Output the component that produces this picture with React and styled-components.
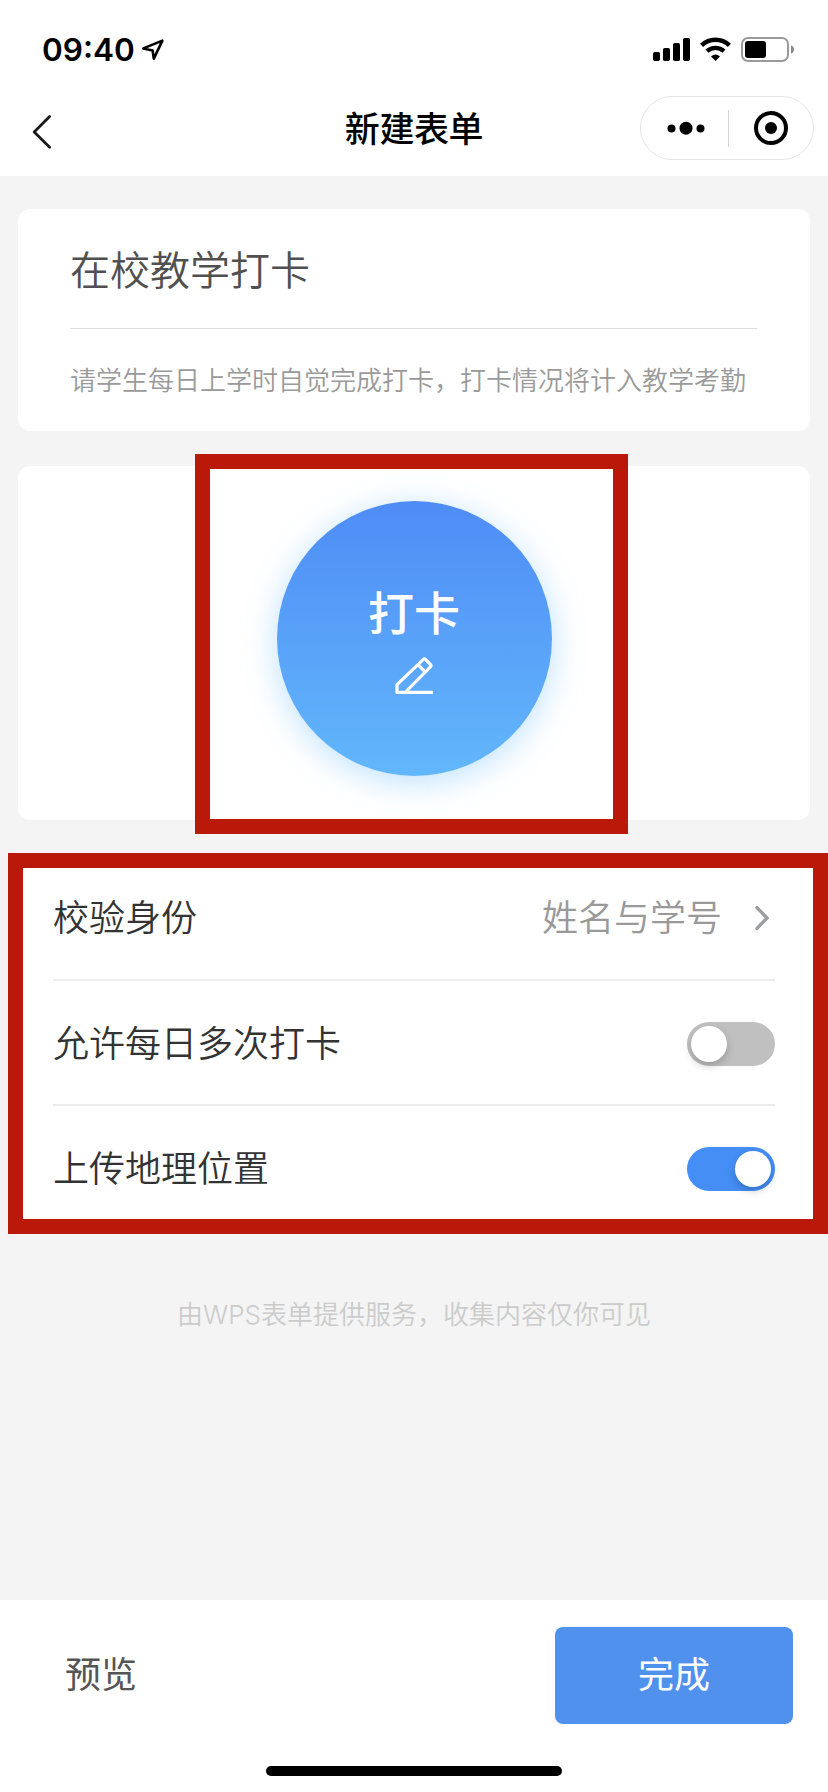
import React from "react";
import styled, { createGlobalStyle } from "styled-components";

const GlobalStyle = createGlobalStyle`
  * { box-sizing: border-box; }
  body {
    margin: 0;
    background: #f4f4f4;
    font-family: "Noto Sans CJK SC", "Noto Sans", sans-serif;
  }
`;

const Screen = styled.div`
  width: 828px;
  height: 1792px;
  display: flex;
  flex-direction: column;
  background: #f4f4f4;
  overflow: hidden;
`;

const StatusBar = styled.div`
  height: 88px;
  flex: none;
  display: flex;
  justify-content: space-between;
  align-items: flex-start;
  padding: 30px 33px 0 42px;
  background: #fff;
`;

const Clock = styled.div`
  display: flex;
  align-items: center;
  gap: 6px;
  height: 40px;
  color: #000;
  font-family: Inter, "Liberation Sans", sans-serif;
  font-size: 31.5px;
  font-weight: 600;
  line-height: 40px;
`;

const Time = styled.span`
  width: 93px;
  white-space: nowrap;
`;

const StatusIcons = styled.div`
  display: flex;
  gap: 10px;
  padding-top: 7px;
`;

const NavBar = styled.div`
  height: 88px;
  flex: none;
  display: grid;
  grid-template-columns: 1fr auto 1fr;
  align-items: start;
  padding: 8px 14px 0 14px;
  background: #fff;
`;

const BackButton = styled.button`
  width: 54px;
  height: 72px;
  display: flex;
  padding: 18px 0 0 18px;
  border: 0;
  background: none;
`;

const Title = styled.h1`
  margin: 0;
  color: #000;
  font-size: 35px;
  font-weight: 500;
  line-height: 62px;
  letter-spacing: -0.4px;
`;

const Capsule = styled.div`
  justify-self: end;
  width: 174px;
  height: 64px;
  display: flex;
  align-items: center;
  border: 1px solid #e4e4e4;
  border-radius: 32px;
`;

const CapsuleButton = styled.button`
  flex: 1;
  height: 37px;
  display: flex;
  align-items: center;
  justify-content: center;
  padding: 0 0 0 3px;
  border: 0;
  background: none;

  & + & {
    padding: 0;
    border-left: 1px solid #d4d4d4;
  }
`;

const Content = styled.main`
  flex: 1;
  display: flex;
  flex-direction: column;
  padding-top: 33px;
`;

const Card = styled.section`
  margin: 0 18px;
  border-radius: 12px;
  background: #fff;
`;

const FormCard = styled(Card)`
  height: 222px;
  padding: 0 53px 0 52px;
`;

const FormTitle = styled.h2`
  margin: 0;
  height: 120px;
  border-bottom: 1px solid #dedede;
  color: #505050;
  font-size: 40px;
  font-weight: 350;
  line-height: 119px;
`;

const FormDescription = styled.p`
  margin: 0;
  color: #9a9a9a;
  font-size: 26px;
  font-weight: 350;
  line-height: 100px;
  white-space: nowrap;
`;

const PunchCard = styled(Card)`
  position: relative;
  height: 354px;
  margin-top: 35px;
  display: flex;
  justify-content: center;
  align-items: flex-start;
  padding-top: 35px;
`;

const PunchButton = styled.button`
  width: 275px;
  height: 275px;
  display: flex;
  flex-direction: column;
  align-items: center;
  gap: 14px;
  padding: 76px 0 0;
  border: 0;
  border-radius: 50%;
  background: linear-gradient(180deg, #4f8cf6 0%, #62b7fb 100%);
  box-shadow: 0 6px 32px rgba(98, 183, 251, 0.42);
  color: #fff;
  font-family: inherit;
  font-size: 46px;
  font-weight: 500;
  line-height: 66px;
`;

const PunchHighlight = styled.div`
  position: absolute;
  top: -12px;
  left: 177px;
  width: 433px;
  height: 380px;
  border: 15px solid #ba190a;
  pointer-events: none;
`;

const Settings = styled.section`
  margin: 33px 0 0 8px;
  height: 381px;
  padding: 0 39px 0 30px;
  border: 15px solid #ba190a;
  background: #fff;
`;

const SettingRow = styled.div`
  height: ${(p) => (p.$first ? 113 : 125)}px;
  display: flex;
  align-items: center;
  justify-content: space-between;
  margin-right: -1px;
  padding: ${(p) => (p.$first ? "0 0 12px" : p.$last ? "0" : "2px 0 0")};
  border-bottom: ${(p) => (p.$last ? "0" : "2px solid #ececec")};
  color: #333;
  font-size: 36px;
  font-weight: 350;
`;

const SettingLabel = styled.span`
  height: 52px;
  line-height: 47px;
`;

const SettingValue = styled.span`
  display: flex;
  align-items: center;
  gap: 32px;
  height: 52px;
  padding-right: 5px;
  color: #999;
  line-height: 47px;

  span { height: 52px; }
`;

const Toggle = styled.div`
  width: 88px;
  height: 44px;
  display: flex;
  justify-content: ${(p) => (p.$on ? "flex-end" : "flex-start")};
  padding: 4px;
  border-radius: 22px;
  background: ${(p) => (p.$on ? "#448ef6" : "#c0c0c0")};
`;

const Knob = styled.span`
  width: 36px;
  height: 36px;
  border-radius: 50%;
  background: #fff;
  box-shadow: 0 4px 8px rgba(0, 0, 0, 0.2);
`;

const ServiceNote = styled.p`
  margin: 61px 0 0;
  color: #cbcbcb;
  font-family: Inter, "Noto Sans CJK SC", sans-serif;
  font-size: 26px;
  font-weight: 350;
  line-height: 40px;
  text-align: center;
`;

const BottomBar = styled.footer`
  height: 192px;
  flex: none;
  display: flex;
  flex-direction: column;
  align-items: center;
  background: #fff;
`;

const Actions = styled.div`
  width: 100%;
  height: 166px;
  display: flex;
  justify-content: space-between;
  align-items: flex-start;
  padding: 27px 35px 0 65px;
`;

const ActionButton = styled.button`
  width: ${(p) => (p.$primary ? "238px" : "auto")};
  height: 97px;
  padding: 0 0 8px;
  border: 0;
  border-radius: 8px;
  background: ${(p) => (p.$primary ? "#5191ee" : "transparent")};
  color: ${(p) => (p.$primary ? "#fff" : "#555")};
  font-family: inherit;
  font-size: 36px;
  font-weight: 400;
`;

const HomeIndicator = styled.div`
  width: 296px;
  height: 10px;
  border-radius: 5px;
  background: #000;
`;

const LocationIcon = () => (
  <svg width="24" height="24" viewBox="0 0 24 24" fill="none" stroke="#000" strokeWidth="2.6" strokeLinejoin="round">
    <path d="M21.4 2.6 L2.3 10.4 L11.6 12.4 L12.8 20.6 Z" />
  </svg>
);

const SignalIcon = () => (
  <svg width="37" height="24" viewBox="0 0 37 24">
    <rect x="0" y="15" width="7" height="9" rx="1.8" />
    <rect x="10" y="11" width="7" height="13" rx="1.8" />
    <rect x="20" y="6" width="7" height="18" rx="1.8" />
    <rect x="30" y="1" width="7" height="23" rx="1.8" />
  </svg>
);

const WifiIcon = () => (
  <svg width="31" height="24" viewBox="0 0 31 24" fill="none" stroke="#000" strokeWidth="4.4">
    <path d="M1.6 8.4 A20 20 0 0 1 29.4 8.4" />
    <path d="M7 14.2 A12.4 12.4 0 0 1 24 14.2" />
    <path d="M11 19.4 Q15.5 15.4 20 19.4 L15.5 23.9 Z" fill="#000" stroke="none" />
  </svg>
);

const BatteryIcon = () => (
  <svg width="54" height="25" viewBox="0 0 54 25">
    <rect x="1" y="1" width="46" height="23" rx="6" fill="none" stroke="#9a9a9a" strokeWidth="2" />
    <rect x="4" y="4" width="21" height="17" rx="3" />
    <path d="M50 8.5 Q53 9.3 53 12.5 Q53 15.7 50 16.5 Z" fill="#8a8a8a" />
  </svg>
);

const BackIcon = () => (
  <svg width="22" height="36" viewBox="0 0 22 36" fill="none" stroke="#1a1a1a" strokeWidth="2.8" strokeLinecap="round" strokeLinejoin="round">
    <path d="M17.6 2.6 L2.2 17.9 L17.6 33.2" />
  </svg>
);

const MoreIcon = () => (
  <svg width="38" height="14" viewBox="0 0 38 14">
    <circle cx="4.5" cy="7.6" r="4" />
    <circle cx="19" cy="7.2" r="6.5" />
    <circle cx="33.5" cy="7.6" r="4" />
  </svg>
);

const CloseIcon = () => (
  <svg width="36" height="36" viewBox="0 0 36 36">
    <circle cx="18" cy="18" r="15" fill="none" stroke="#000" strokeWidth="4" />
    <circle cx="18" cy="18" r="6" />
  </svg>
);

const PencilIcon = () => (
  <svg width="40" height="40" viewBox="0 0 40 40" fill="none" stroke="#fff" strokeWidth="3.2" strokeLinejoin="round">
    <path d="M39 35.4 H3 V27.6 L29.4 2.4 Q30.4 1.5 31.4 2.4 L36.6 7.6 Q37.4 8.6 36.6 9.6 L11.6 35" />
    <path d="M24.2 7.8 L31.1 14.8" />
  </svg>
);

const ChevronIcon = () => (
  <svg width="16" height="28" viewBox="0 0 16 28" fill="none" stroke="#999ea1" strokeWidth="3.4" strokeLinecap="round">
    <path d="M3 3.6 L13 14 L3 24.4" />
  </svg>
);

export default function App() {
  return (
    <Screen>
      <GlobalStyle />
      <StatusBar>
        <Clock>
          <Time>09:40</Time>
          <LocationIcon />
        </Clock>
        <StatusIcons>
          <SignalIcon />
          <WifiIcon />
          <BatteryIcon />
        </StatusIcons>
      </StatusBar>
      <NavBar>
        <BackButton aria-label="返回">
          <BackIcon />
        </BackButton>
        <Title>新建表单</Title>
        <Capsule>
          <CapsuleButton aria-label="更多">
            <MoreIcon />
          </CapsuleButton>
          <CapsuleButton aria-label="关闭">
            <CloseIcon />
          </CapsuleButton>
        </Capsule>
      </NavBar>
      <Content>
        <FormCard>
          <FormTitle>在校教学打卡</FormTitle>
          <FormDescription>请学生每日上学时自觉完成打卡，打卡情况将计入教学考勤</FormDescription>
        </FormCard>
        <PunchCard>
          <PunchButton>
            打卡
            <PencilIcon />
          </PunchButton>
          <PunchHighlight />
        </PunchCard>
        <Settings>
          <SettingRow $first>
            <SettingLabel>校验身份</SettingLabel>
            <SettingValue>
              <span>姓名与学号</span>
              <ChevronIcon />
            </SettingValue>
          </SettingRow>
          <SettingRow>
            <SettingLabel>允许每日多次打卡</SettingLabel>
            <Toggle>
              <Knob />
            </Toggle>
          </SettingRow>
          <SettingRow $last>
            <SettingLabel>上传地理位置</SettingLabel>
            <Toggle $on>
              <Knob />
            </Toggle>
          </SettingRow>
        </Settings>
        <ServiceNote>由WPS表单提供服务，收集内容仅你可见</ServiceNote>
      </Content>
      <BottomBar>
        <Actions>
          <ActionButton>预览</ActionButton>
          <ActionButton $primary>完成</ActionButton>
        </Actions>
        <HomeIndicator />
      </BottomBar>
    </Screen>
  );
}
